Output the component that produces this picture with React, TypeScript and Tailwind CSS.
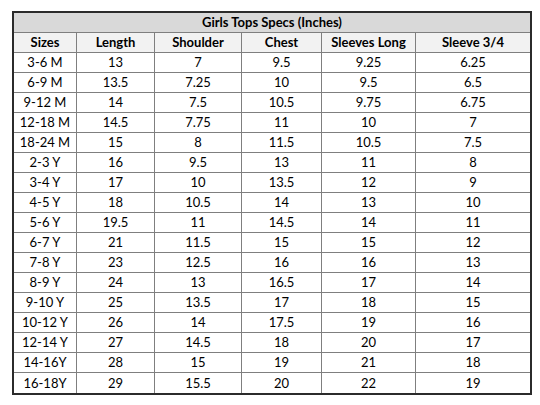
const columns = ['Sizes', 'Length', 'Shoulder', 'Chest', 'Sleeves Long', 'Sleeve 3/4']

const rows: string[][] = [
  ['3-6 M', '13', '7', '9.5', '9.25', '6.25'],
  ['6-9 M', '13.5', '7.25', '10', '9.5', '6.5'],
  ['9-12 M', '14', '7.5', '10.5', '9.75', '6.75'],
  ['12-18 M', '14.5', '7.75', '11', '10', '7'],
  ['18-24 M', '15', '8', '11.5', '10.5', '7.5'],
  ['2-3 Y', '16', '9.5', '13', '11', '8'],
  ['3-4 Y', '17', '10', '13.5', '12', '9'],
  ['4-5 Y', '18', '10.5', '14', '13', '10'],
  ['5-6 Y', '19.5', '11', '14.5', '14', '11'],
  ['6-7 Y', '21', '11.5', '15', '15', '12'],
  ['7-8 Y', '23', '12.5', '16', '16', '13'],
  ['8-9 Y', '24', '13', '16.5', '17', '14'],
  ['9-10 Y', '25', '13.5', '17', '18', '15'],
  ['10-12 Y', '26', '14', '17.5', '19', '16'],
  ['12-14 Y', '27', '14.5', '18', '20', '17'],
  ['14-16Y', '28', '15', '19', '21', '18'],
  ['16-18Y', '29', '15.5', '20', '22', '19'],
]

const grid = 'grid grid-cols-[63px_78px_87px_80px_94px_114px]'

export default function App() {
  return (
    <div
      className="w-[540px] h-[405px] bg-white pl-3 pt-[11px] text-black"
      style={{ fontFamily: 'Lato, "Liberation Sans", sans-serif' }}
    >
      <div className="w-[520px] border-2 border-[#2b2b2b]">
        <div className="h-5 bg-[#d9d9d9] border-b border-[#7f7f7f] flex items-center justify-center text-[13px] font-bold leading-none">
          Girls Tops Specs (Inches)
        </div>
        <div className={`${grid} h-5 bg-[#f2f2f2]`}>
          {columns.map((c, i) => (
            <div
              key={c}
              className={`flex items-center justify-center border-b border-[#7f7f7f] text-[13px] font-bold leading-none ${
                i < columns.length - 1 ? 'border-r' : ''
              }`}
            >
              {c}
            </div>
          ))}
        </div>
        {rows.map((row, r) => (
          <div key={row[0]} className={`${grid} h-5`}>
            {row.map((v, i) => (
              <div
                key={i}
                className={`flex items-center justify-center border-[#7f7f7f] text-[13px] leading-none ${
                  i < row.length - 1 ? 'border-r' : ''
                } ${r < rows.length - 1 ? 'border-b' : ''}`}
              >
                {v}
              </div>
            ))}
          </div>
        ))}
      </div>
    </div>
  )
}
